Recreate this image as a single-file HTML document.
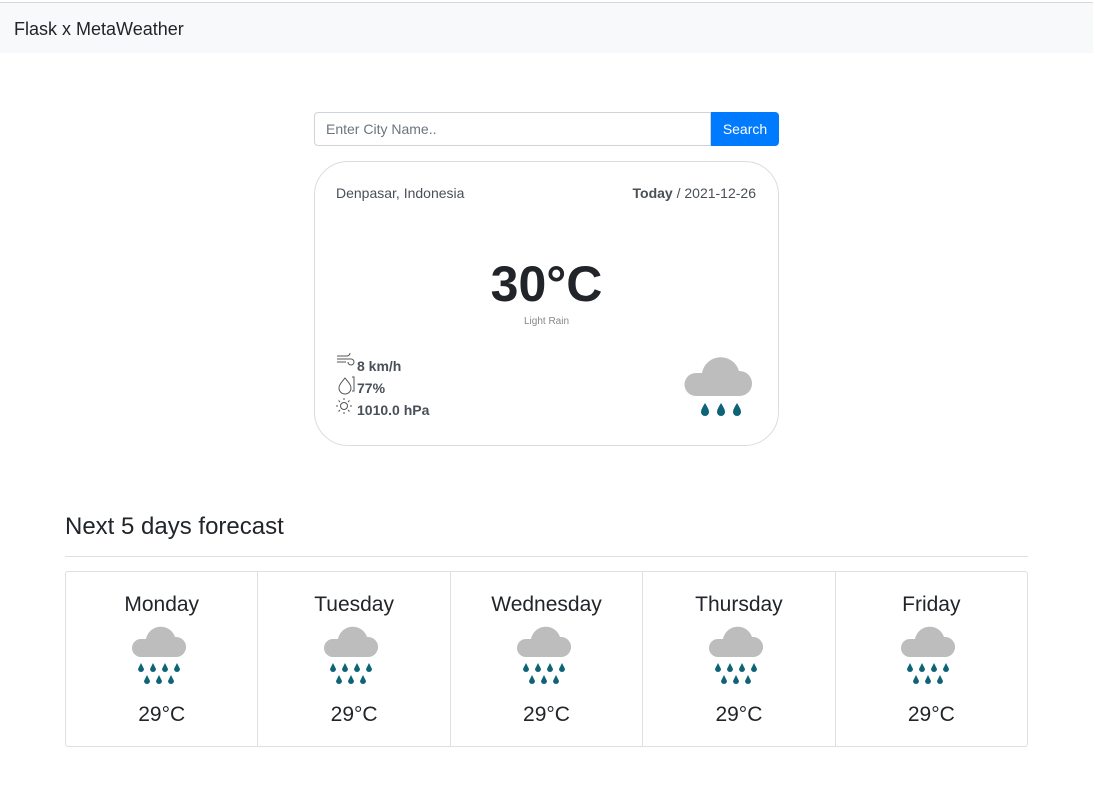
<!DOCTYPE html>
<html><head><meta charset="utf-8"><style>
*{box-sizing:border-box;margin:0;padding:0}
body{width:1095px;height:792px;background:#fff;font-family:"Liberation Sans",sans-serif;color:#212529;position:relative;overflow:hidden}
.nav{position:absolute;top:2px;left:0;width:1093px;height:51px;background:#f8f9fa;font-size:18px;padding:16px 14px;border-top:1px solid #d8d8d8}
.abs{position:absolute}
.input{left:314px;top:112px;width:397px;height:34px;border:1px solid #ced4da;border-radius:4px 0 0 4px;font-size:14px;color:#6c757d;padding:8px 11px}
.btn{left:711px;top:112px;width:68px;height:34px;background:#007bff;color:#fff;border-radius:0 4px 4px 0;font-size:14px;text-align:center;line-height:34px}
.card{left:314px;top:161px;width:465px;height:285px;border:1px solid #dcdcdc;border-radius:34px}
.small{font-size:14px;color:#495057}
.stat{font-size:14px;font-weight:bold;color:#495057;left:336px}
.fc{left:65px;top:571px;width:963px;height:176px;border:1px solid #dfdfdf;border-radius:3px;display:flex}
.fc div.c{flex:1;border-right:1px solid #dfdfdf;text-align:center;padding-top:21px;font-size:21px}
.fc div.c:last-child{border-right:none}
.fc svg{margin:6px 0 12px}
</style></head><body>
<div class="nav">Flask x MetaWeather</div>
<div class="abs input">Enter City Name..</div>
<div class="abs btn">Search</div>
<div class="abs card"></div>
<div class="abs small" style="left:336px;top:185px;">Denpasar, Indonesia</div>
<div class="abs small" style="right:339px;top:185px;"><b>Today</b> / 2021-12-26</div>
<div class="abs" style="left:314px;width:465px;text-align:center;top:255px;font-size:50px;font-weight:bold;color:#212529">30°C</div>
<div class="abs" style="left:314px;width:465px;text-align:center;top:316px;font-size:10px;color:#888">Light Rain</div>
<svg class="abs" style="left:336px;top:353px" width="20" height="64" fill="none" stroke="#555" stroke-width="1">
<path d="M1 3h10a3 3 0 1 0-3-3M1 6h14a3 3 0 1 1-3 3M1 9h9"/>
<path d="M9 25c-4 5-6 7-6 10a6 6 0 0 0 12 0c0-3-2-5-6-10z"/><path d="M16 24h2v14h-2"/>
<circle cx="8" cy="53" r="3.5"/><path d="M8 45v2M8 59v2M0 53h2M14 53h2M2.5 47.5l1.5 1.5M12 57l1.5 1.5M2.5 58.5l1.5-1.5M12 49l1.5-1.5"/>
</svg>
<div class="abs stat" style="left:357px;top:358px">8 km/h</div>
<div class="abs stat" style="left:357px;top:380px">77%</div>
<div class="abs stat" style="left:357px;top:402px">1010.0 hPa</div>
<svg class="abs" style="left:684px;top:354px" width="74" height="68">
<path d="M12 42a11 11 0 0 1 0-23h6a19 19 0 0 1 37 -2a12.5 12.5 0 0 1 1 25z" fill="#bdbdbd"/>
<g fill="#0e6477"><path d="M21 49c-3 5-4 7-4 9a4 4 0 0 0 8 0c0-2-1-4-4-9z"/><path d="M37 49c-3 5-4 7-4 9a4 4 0 0 0 8 0c0-2-1-4-4-9z"/><path d="M53 49c-3 5-4 7-4 9a4 4 0 0 0 8 0c0-2-1-4-4-9z"/></g>
</svg>
<div class="abs" style="left:65px;top:513px;font-size:24px">Next 5 days forecast</div>
<div class="abs" style="left:65px;top:556px;width:963px;border-top:1px solid #dfdfdf"></div>
<div class="abs fc">
<div class="c">Monday<br><svg width="62" height="62"><path d="M10 34a9 9 0 0 1 0-18h5a15 15 0 0 1 29-2a10 10 0 0 1 2 20z" fill="#bdbdbd"/><g fill="#0e6477"><path d="M10 40l-3 6a3 3 0 0 0 6 0z"/><path d="M22 40l-3 6a3 3 0 0 0 6 0z"/><path d="M34 40l-3 6a3 3 0 0 0 6 0z"/><path d="M46 40l-3 6a3 3 0 0 0 6 0z"/><path d="M16 52l-3 6a3 3 0 0 0 6 0z"/><path d="M28 52l-3 6a3 3 0 0 0 6 0z"/><path d="M40 52l-3 6a3 3 0 0 0 6 0z"/></g></svg><br>29°C</div>
<div class="c">Tuesday<br><svg width="62" height="62"><path d="M10 34a9 9 0 0 1 0-18h5a15 15 0 0 1 29-2a10 10 0 0 1 2 20z" fill="#bdbdbd"/><g fill="#0e6477"><path d="M10 40l-3 6a3 3 0 0 0 6 0z"/><path d="M22 40l-3 6a3 3 0 0 0 6 0z"/><path d="M34 40l-3 6a3 3 0 0 0 6 0z"/><path d="M46 40l-3 6a3 3 0 0 0 6 0z"/><path d="M16 52l-3 6a3 3 0 0 0 6 0z"/><path d="M28 52l-3 6a3 3 0 0 0 6 0z"/><path d="M40 52l-3 6a3 3 0 0 0 6 0z"/></g></svg><br>29°C</div>
<div class="c">Wednesday<br><svg width="62" height="62"><path d="M10 34a9 9 0 0 1 0-18h5a15 15 0 0 1 29-2a10 10 0 0 1 2 20z" fill="#bdbdbd"/><g fill="#0e6477"><path d="M10 40l-3 6a3 3 0 0 0 6 0z"/><path d="M22 40l-3 6a3 3 0 0 0 6 0z"/><path d="M34 40l-3 6a3 3 0 0 0 6 0z"/><path d="M46 40l-3 6a3 3 0 0 0 6 0z"/><path d="M16 52l-3 6a3 3 0 0 0 6 0z"/><path d="M28 52l-3 6a3 3 0 0 0 6 0z"/><path d="M40 52l-3 6a3 3 0 0 0 6 0z"/></g></svg><br>29°C</div>
<div class="c">Thursday<br><svg width="62" height="62"><path d="M10 34a9 9 0 0 1 0-18h5a15 15 0 0 1 29-2a10 10 0 0 1 2 20z" fill="#bdbdbd"/><g fill="#0e6477"><path d="M10 40l-3 6a3 3 0 0 0 6 0z"/><path d="M22 40l-3 6a3 3 0 0 0 6 0z"/><path d="M34 40l-3 6a3 3 0 0 0 6 0z"/><path d="M46 40l-3 6a3 3 0 0 0 6 0z"/><path d="M16 52l-3 6a3 3 0 0 0 6 0z"/><path d="M28 52l-3 6a3 3 0 0 0 6 0z"/><path d="M40 52l-3 6a3 3 0 0 0 6 0z"/></g></svg><br>29°C</div>
<div class="c">Friday<br><svg width="62" height="62"><path d="M10 34a9 9 0 0 1 0-18h5a15 15 0 0 1 29-2a10 10 0 0 1 2 20z" fill="#bdbdbd"/><g fill="#0e6477"><path d="M10 40l-3 6a3 3 0 0 0 6 0z"/><path d="M22 40l-3 6a3 3 0 0 0 6 0z"/><path d="M34 40l-3 6a3 3 0 0 0 6 0z"/><path d="M46 40l-3 6a3 3 0 0 0 6 0z"/><path d="M16 52l-3 6a3 3 0 0 0 6 0z"/><path d="M28 52l-3 6a3 3 0 0 0 6 0z"/><path d="M40 52l-3 6a3 3 0 0 0 6 0z"/></g></svg><br>29°C</div>
</div>
</body></html>
